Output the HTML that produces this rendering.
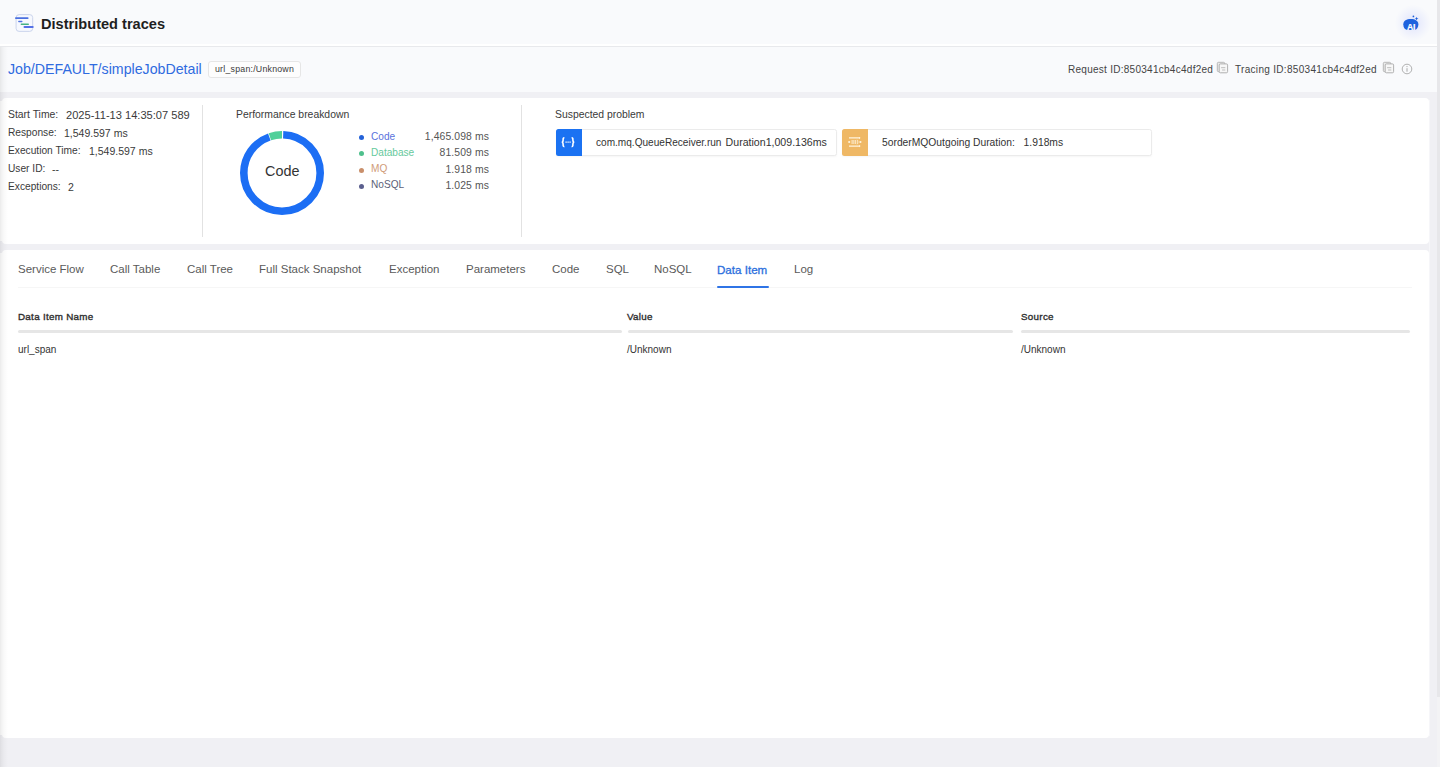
<!DOCTYPE html>
<html>
<head>
<meta charset="utf-8">
<style>
*{margin:0;padding:0;box-sizing:border-box}
html,body{width:1440px;height:767px;overflow:hidden}
body{position:relative;background:#f0f0f4;font-family:"Liberation Sans",sans-serif;color:#333}
.a{position:absolute;white-space:nowrap;line-height:1}
#hdr{position:absolute;left:0;top:0;width:1437px;height:47px;background:#f9fafc;border-bottom:1px solid #e8e9ec;box-shadow:inset 0 -2px 0 #fff}
#row2{position:absolute;left:0;top:47px;width:1437px;height:45px;background:#f9fafc}
#sb{position:absolute;left:1437px;top:0;width:3px;height:697px;background:#e7e7ea}
#sbt{position:absolute;left:1437px;top:697px;width:3px;height:70px;background:#f3f3f5}
.card{position:absolute;background:#fff;border-radius:4px}
#c1{left:2px;top:98px;width:1427px;height:146px}
#c2{left:2px;top:250px;width:1427px;height:488px}
#lsh{position:absolute;left:0;top:47px;width:8px;height:720px;background:linear-gradient(to right,rgba(0,0,0,0.08),rgba(0,0,0,0.05) 20%,rgba(0,0,0,0.025) 50%,rgba(0,0,0,0) 100%)}
.lw{position:absolute;left:0;width:3px;background:#fff}
#rsh{position:absolute;left:1429px;top:100px;width:1px;height:636px;background:#f6f6f9}
.vdiv{position:absolute;width:1px;background:#e2e2e2}
.lbl{color:#3a3a3a}
.tab{position:absolute;top:264px;font-size:11.5px;line-height:1;color:#5a5a5a;white-space:nowrap}
.th{position:absolute;top:311.5px;font-size:9.8px;letter-spacing:0.3px;color:#2e2e2e;-webkit-text-stroke:0.35px #2e2e2e;line-height:1}
.td{position:absolute;top:345px;font-size:10px;color:#333;line-height:1}
.hl{position:absolute;top:330px;height:3px;background:#e6e6e6;border-radius:2px}
.prob{position:absolute;top:128.5px;height:27px;background:#fff;border:1px solid #ebebeb;border-radius:2.5px;box-shadow:0 1px 2px rgba(0,0,0,0.04)}
.pico{position:absolute;left:-1px;top:-1px;width:26px;height:27px;border-radius:2.5px 0 0 2.5px}
.ptxt{position:absolute;top:8.2px;font-size:10.3px;line-height:1;color:#333;white-space:nowrap}
.dot{position:absolute;left:359px;width:5px;height:5px;border-radius:50%}
.leg{position:absolute;left:371px;font-size:10.1px;line-height:1;white-space:nowrap}
.val{position:absolute;right:951px;font-size:10.4px;letter-spacing:0.1px;line-height:1;color:#555;white-space:nowrap}
</style>
</head>
<body>
<div id="hdr"></div>
<div id="row2"></div>
<div id="sb"></div>
<div id="sbt"></div>

<!-- header -->
<svg class="a" style="left:15px;top:14px" width="20" height="18" viewBox="0 0 20 18">
  <rect x="1.1" y="0.6" width="16.6" height="16.8" rx="3" fill="#f6f8fe" stroke="#c6d0ea" stroke-width="0.9"/>
  <rect x="0" y="3.2" width="13.6" height="1.8" rx="0.9" fill="#4a6fe0"/>
  <rect x="3.1" y="6.7" width="4.4" height="1.5" rx="0.75" fill="#4f74e2"/>
  <rect x="5.6" y="9.5" width="8.4" height="1.5" rx="0.75" fill="#45b284"/>
  <rect x="8.5" y="12.1" width="10.2" height="2" rx="1" fill="#5470e6"/>
</svg>
<div class="a" style="left:41px;top:16.5px;font-size:14.6px;font-weight:bold;color:#1f1f1f">Distributed traces</div>

<div class="a" style="left:1395px;top:5px;width:36px;height:36px;border-radius:50%;background:radial-gradient(circle at 50% 50%,rgba(214,220,252,0.75) 0%,rgba(224,228,252,0.5) 35%,rgba(235,238,252,0.25) 60%,rgba(249,250,252,0) 72%)"></div>
<svg class="a" style="left:1402px;top:14px" width="18" height="18" viewBox="0 0 18 18">
  <path d="M1.3 10.2 C1.3 6.6 4.6 4.9 8.9 4.9 C13.2 4.9 16.4 6.8 16.4 10.4 C16.4 13.4 14.6 15.6 12.5 15.9 L5 15.9 C2.8 15.6 1.3 13.3 1.3 10.2 Z" fill="#1f63de"/>
  <text x="9" y="15.6" font-family="Liberation Sans" font-weight="bold" font-size="8.6" fill="#fff" stroke="#fff" stroke-width="0.2" text-anchor="middle" letter-spacing="-0.3">AI</text>
  <circle cx="11.4" cy="2.4" r="0.85" fill="#1f5fd8"/>
  <path d="M14.6 3 L15.3 4.2 L16.5 4.6 L15.3 5 L14.6 6.2 L13.9 5 L12.7 4.6 L13.9 4.2 Z" fill="#1f5fd8"/>
</svg>

<!-- row 2 -->
<div class="a" style="left:8px;top:62px;font-size:14.2px;color:#2f6be0">Job/DEFAULT/simpleJobDetail</div>
<div class="a" style="left:207.5px;top:60.5px;width:93.5px;height:17.5px;border:1px solid #e6e6e6;border-radius:3px;background:#fdfdfd"></div>
<div class="a" style="left:215px;top:65px;font-size:8.8px;letter-spacing:0.22px;color:#3a3a3a">url_span:/Unknown</div>

<div class="a" style="left:1068px;top:64.5px;font-size:10px;letter-spacing:0.27px;color:#444">Request ID:850341cb4c4df2ed</div>
<svg class="a" style="left:1214px;top:59px" width="18" height="18" viewBox="0 0 18 18">
  <rect x="3.3" y="3.3" width="7.4" height="9.4" rx="1.2" fill="#ececec" stroke="#b0b0b0" stroke-width="0.9"/>
  <rect x="5.2" y="4.9" width="8.4" height="8.9" rx="1.2" fill="#f7f7f7" stroke="#a8a8a8" stroke-width="0.9"/>
  <path d="M7.1 8.7h4.2M8.1 11h3.2" stroke="#b5b5b5" stroke-width="0.9"/>
</svg>
<div class="a" style="left:1235px;top:64.5px;font-size:10px;letter-spacing:0.31px;color:#444">Tracing ID:850341cb4c4df2ed</div>
<svg class="a" style="left:1380px;top:59px" width="18" height="18" viewBox="0 0 18 18">
  <rect x="3.3" y="3.3" width="7.4" height="9.4" rx="1.2" fill="#ececec" stroke="#b0b0b0" stroke-width="0.9"/>
  <rect x="5.2" y="4.9" width="8.4" height="8.9" rx="1.2" fill="#f7f7f7" stroke="#a8a8a8" stroke-width="0.9"/>
  <path d="M7.1 8.7h4.2M8.1 11h3.2" stroke="#b5b5b5" stroke-width="0.9"/>
</svg>
<svg class="a" style="left:1401px;top:63px" width="12" height="12" viewBox="0 0 12 12">
  <circle cx="6" cy="6" r="4.8" fill="none" stroke="#a8a8a8" stroke-width="0.9"/>
  <path d="M6 5.2v3.5" stroke="#a8a8a8" stroke-width="1"/>
  <circle cx="6" cy="3.6" r="0.6" fill="#a8a8a8"/>
</svg>

<!-- card 1 -->
<div class="card" id="c1"></div>
<div class="a lbl" style="left:8px;top:110px;font-size:10.4px">Start Time:</div>
<div class="a lbl" style="left:66px;top:110px;font-size:11.1px">2025-11-13 14:35:07 589</div>
<div class="a lbl" style="left:8px;top:128px;font-size:10.2px">Response:</div>
<div class="a lbl" style="left:64px;top:128px;font-size:10.5px">1,549.597 ms</div>
<div class="a lbl" style="left:8px;top:146px;font-size:10.2px">Execution Time:</div>
<div class="a lbl" style="left:89px;top:146px;font-size:10.5px">1,549.597 ms</div>
<div class="a lbl" style="left:8px;top:164px;font-size:10.2px">User ID:</div>
<div class="a lbl" style="left:52px;top:164px;font-size:10.5px">--</div>
<div class="a lbl" style="left:8px;top:182px;font-size:10.2px">Exceptions:</div>
<div class="a lbl" style="left:68px;top:182px;font-size:10.5px">2</div>

<div class="vdiv" style="left:202px;top:105px;height:132px"></div>
<div class="vdiv" style="left:521px;top:105px;height:132px"></div>

<div class="a lbl" style="left:236px;top:110px;font-size:10.4px">Performance breakdown</div>
<svg class="a" style="left:237.5px;top:128.5px" width="88" height="88" viewBox="0 0 88 88">
  <g transform="rotate(-90 44 44)">
    <circle cx="44" cy="44" r="38.2" fill="none" stroke="#1c6ef4" stroke-width="7.6"
      stroke-dasharray="225.5 1000" stroke-dashoffset="-1.2"/>
    <circle cx="44" cy="44" r="38.2" fill="none" stroke="#50d09a" stroke-width="7.6"
      stroke-dasharray="12.5 1000" stroke-dashoffset="-227.3"/>
  </g>
</svg>
<div class="a" style="left:265px;top:164px;font-size:14.4px;color:#333">Code</div>

<div class="dot" style="top:135px;background:#2462d8"></div>
<div class="leg" style="top:131.5px;color:#5a72dc">Code</div>
<div class="val" style="top:132px">1,465.098 ms</div>
<div class="dot" style="top:151px;background:#4fc08d"></div>
<div class="leg" style="top:147.5px;color:#66c99c">Database</div>
<div class="val" style="top:148px">81.509 ms</div>
<div class="dot" style="top:167.5px;background:#c98f6b"></div>
<div class="leg" style="top:164px;color:#d09b78">MQ</div>
<div class="val" style="top:164.5px">1.918 ms</div>
<div class="dot" style="top:183.5px;background:#5b5f8e"></div>
<div class="leg" style="top:180px;color:#5c5f78">NoSQL</div>
<div class="val" style="top:180.5px">1.025 ms</div>

<div class="a lbl" style="left:555px;top:110px;font-size:10.4px">Suspected problem</div>

<div class="prob" style="left:556px;width:281px">
  <div class="pico" style="background:#1b72f2"></div>
  <svg class="a" style="left:4px;top:7px" width="15" height="11" viewBox="0 0 15 11">
    <path d="M3.4 0.8 C2 0.8 2.1 1.9 2.1 3.1 C2.1 4.3 1.7 5.2 0.7 5.2 C1.7 5.2 2.1 6.1 2.1 7.3 C2.1 8.5 2 9.6 3.4 9.6" fill="none" stroke="#fff" stroke-width="1.6"/>
    <path d="M10.6 0.8 C12 0.8 11.9 1.9 11.9 3.1 C11.9 4.3 12.3 5.2 13.3 5.2 C12.3 5.2 11.9 6.1 11.9 7.3 C11.9 8.5 12 9.6 10.6 9.6" fill="none" stroke="#fff" stroke-width="1.6"/>
    <path d="M4.4 5.2h5.4" stroke="#e8f2ff" stroke-width="1.3" stroke-dasharray="1.4 0.6"/>
  </svg>
  <div class="ptxt" style="left:39px;font-size:10.08px">com.mq.QueueReceiver.run</div><div class="ptxt" style="left:168.6px;font-size:10.6px;top:7.5px">Duration1,009.136ms</div>
</div>

<div class="prob" style="left:842px;width:310px">
  <div class="pico" style="background:#efb865"></div>
  <svg class="a" style="left:5px;top:7px" width="14" height="11" viewBox="0 0 14 11">
    <path d="M1 0.9h11M1 9.1h11" stroke="#fff4dd" stroke-width="1.1"/>
    <path d="M11 0.1l1.2 0.8l-1.2 0.8M11 8.3l1.2 0.8l-1.2 0.8" fill="none" stroke="#fff4dd" stroke-width="0.8"/>
    <path d="M4.1 3v4M5.9 3v4M7.7 3v4" stroke="#fff4dd" stroke-width="0.9"/>
    <path d="M9.2 2.8c0.9 0.8 0.9 3.6 0 4.4" fill="none" stroke="#fff4dd" stroke-width="0.9"/>
    <circle cx="1.2" cy="5" r="1.1" fill="#fff4dd"/><circle cx="12.4" cy="5" r="1.1" fill="#fff4dd"/>
  </svg>
  <div class="ptxt" style="left:39px">5orderMQOutgoing Duration:</div><div class="ptxt" style="left:180.6px">1.918ms</div>
</div>

<!-- card 2 -->
<div class="card" id="c2"></div>
<div class="a" style="left:18px;top:287px;width:1394px;height:1px;background:#f6f6f6"></div>
<div class="tab" style="left:18px">Service Flow</div>
<div class="tab" style="left:110px">Call Table</div>
<div class="tab" style="left:187px">Call Tree</div>
<div class="tab" style="left:259px">Full Stack Snapshot</div>
<div class="tab" style="left:389px">Exception</div>
<div class="tab" style="left:466px">Parameters</div>
<div class="tab" style="left:552px">Code</div>
<div class="tab" style="left:606px">SQL</div>
<div class="tab" style="left:654px">NoSQL</div>
<div class="tab" style="left:717px;color:#2c6fdd;font-size:11.6px;-webkit-text-stroke:0.3px #2c6fdd">Data Item</div>
<div class="tab" style="left:794px">Log</div>
<div class="a" style="left:717px;top:286px;width:52px;height:2px;background:#2f74e6;border-radius:1px"></div>

<div class="th" style="left:18px">Data Item Name</div>
<div class="th" style="left:627px">Value</div>
<div class="th" style="left:1021px">Source</div>
<div class="hl" style="left:18px;width:604px"></div>
<div class="hl" style="left:628px;width:385px"></div>
<div class="hl" style="left:1021px;width:389px"></div>
<div class="td" style="left:18px">url_span</div>
<div class="td" style="left:627px">/Unknown</div>
<div class="td" style="left:1021px">/Unknown</div>

<div class="lw" style="top:101px;height:140px"></div><div class="lw" style="top:253px;height:482px"></div>
<div id="lsh"></div>
<div id="rsh"></div>
</body>
</html>
